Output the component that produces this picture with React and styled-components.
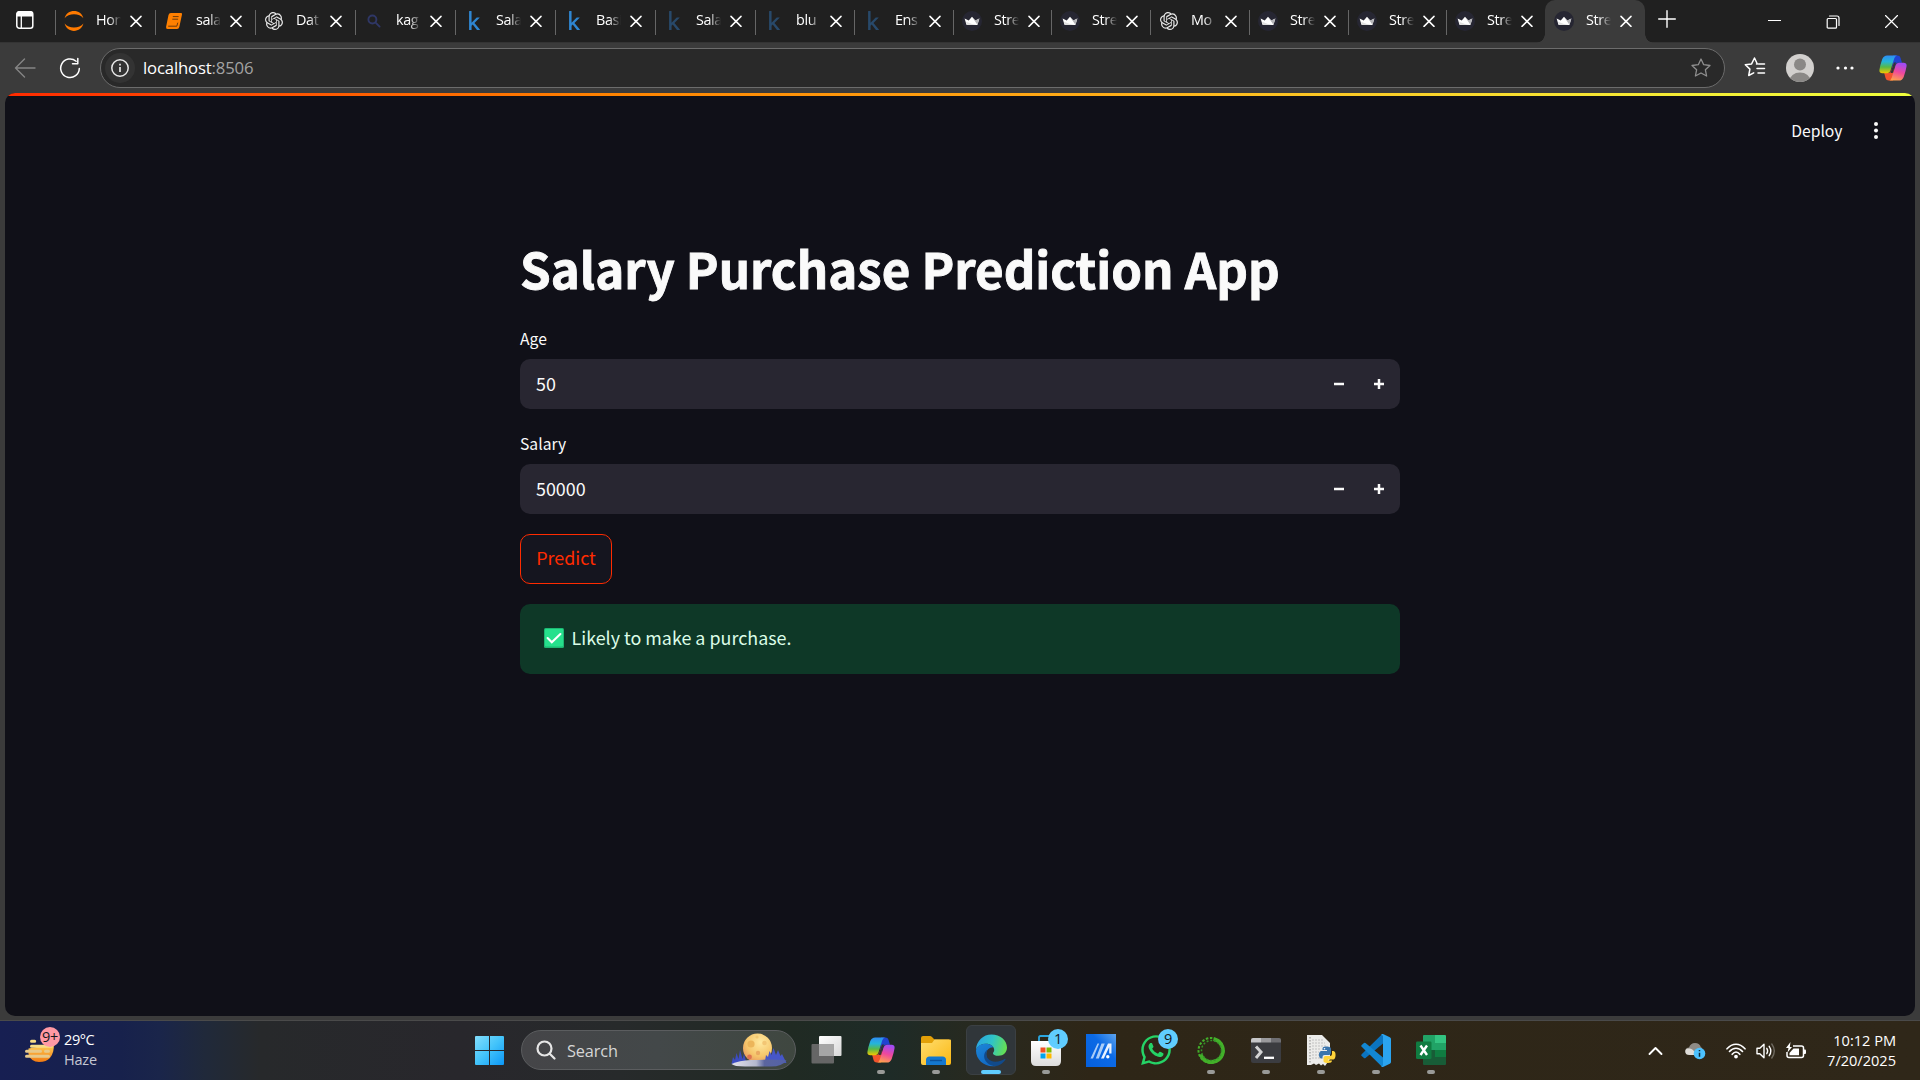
import React from "react";
import styled, { createGlobalStyle, css } from "styled-components";
import { FaKaggle, FaWhatsapp } from "react-icons/fa";
import { SiOpenai } from "react-icons/si";

const Global = createGlobalStyle`
  * { box-sizing: border-box; }
  html, body { margin: 0; padding: 0; height: 100%; overflow: hidden; background: #3b3b3b; }
  svg { display: block; flex: none; }
  button { margin: 0; padding: 0; border: 0; background: none; color: inherit; font: inherit; }
`;

const uiFont = `"Open Sans", "Noto Sans", sans-serif`;
const appFont = `"Noto Sans CJK SC", "Noto Sans", sans-serif`;

const Screen = styled.div`
  width: 1920px;
  height: 1080px;
  display: flex;
  flex-direction: column;
  overflow: hidden;
  font-family: ${uiFont};
  color: #fff;
`;

/* ---------- browser chrome ---------- */

const TabStrip = styled.div`
  height: 43px;
  flex: none;
  display: flex;
  background: #202020;
  border-bottom: 1px solid #343434;
`;

const TabActions = styled.div`
  width: 55px;
  padding: 10px 0 0 15px;
`;

const activeTab = css`
  height: 43px;
  background: #3b3b3b;
  border-radius: 10px 10px 0 0;
  position: relative;
  &::before, &::after {
    content: "";
    position: absolute;
    bottom: 0;
    width: 9px;
    height: 9px;
  }
  &::before { left: -9px; background: radial-gradient(circle at 0 0, transparent 8.5px, #3b3b3b 9px); }
  &::after { right: -9px; background: radial-gradient(circle at 100% 0, transparent 8.5px, #3b3b3b 9px); }
`;

const Tab = styled.div`
  width: ${(p) => p.$width}px;
  height: 42px;
  flex: none;
  display: flex;
  align-items: center;
  ${(p) => p.$active && activeTab}
`;

const TabRule = styled.span`
  width: 1px;
  height: 25px;
  margin-top: 2px;
  background: ${(p) => (p.$hidden ? "transparent" : "#666")};
`;

const TabIcon = styled.span`
  width: 20px;
  height: 20px;
  margin: 0 12px 1px 8px;
  display: flex;
  align-items: center;
  justify-content: center;
  flex: none;
`;

const TabTitle = styled.span`
  width: 34px;
  flex: none;
  white-space: nowrap;
  font-size: 14.4px;
  letter-spacing: -0.4px;
  line-height: 22px;
  padding-bottom: 3px;
  mask-image: linear-gradient(90deg, #000 13px, transparent 25px);
`;

const TabClose = styled.span`
  padding-bottom: 1px;
`;

const NewTab = styled.span`
  margin: 10px 0 0 13px;
`;

const WindowButtons = styled.div`
  display: flex;
  gap: 45px;
  margin: 15px 22px 0 auto;
`;

const Toolbar = styled.div`
  height: 50px;
  flex: none;
  display: flex;
  align-items: center;
  background: #3b3b3b;
  padding-left: 14px;
`;

const NavIcons = styled.div`
  display: flex;
  gap: 23px;
  width: 86px;
  flex: none;
`;

const AddressBar = styled.div`
  width: 1625px;
  height: 40px;
  flex: none;
  border: 1px solid #6c6c6c;
  border-radius: 20px;
  background: #292929;
  display: flex;
  align-items: center;
  padding: 0 13px 0 4px;
`;

const SiteInfo = styled.span`
  width: 30px;
  height: 30px;
  border-radius: 50%;
  background: #333;
  display: flex;
  align-items: center;
  justify-content: center;
`;

const Url = styled.span`
  margin: 0 auto 1px 8px;
  font-size: 16.7px;
  line-height: 24px;
  letter-spacing: -0.15px;
  span { color: #a3a3a3; }
`;

const ToolbarActions = styled.div`
  display: flex;
  align-items: center;
  margin-left: 19px;
`;

const Avatar = styled.span`
  margin: 0 22px 0 20px;
`;

const Assistant = styled.span`
  margin-left: 25px;
`;

/* ---------- page ---------- */

const Viewport = styled.div`
  flex: 1;
  background: #3b3b3b;
  padding: 0 5px 4px;
`;

const Page = styled.div`
  height: 923px;
  border-radius: 10px;
  overflow: hidden;
  background: #101018;
  font-family: ${appFont};
  color: #fafafa;
`;

const Decoration = styled.div`
  height: 3px;
  background: linear-gradient(90deg, #ff2b00 0%, #ff8400 32%, #ffae18 58%, #f8e030 80%, #efff3c 100%);
`;

const PageHeader = styled.header`
  height: 70px;
  display: flex;
  align-items: center;
  justify-content: flex-end;
  gap: 26px;
  padding-right: 32.5px;
`;

const Deploy = styled.button`
  font-size: 15.7px;
  line-height: 28px;
`;

const Main = styled.main`
  width: 880px;
  margin: 0 auto;
  padding-top: 69px;
  display: flex;
  flex-direction: column;
  align-items: stretch;
`;

const Title = styled.h1`
  margin: 0;
  font-size: 49.2px;
  line-height: 66px;
  font-weight: 700;
  white-space: nowrap;
  -webkit-text-stroke: 0.9px #fafafa;
`;

const Field = styled.label`
  display: flex;
  flex-direction: column;
  margin-top: ${(p) => p.$top}px;
`;

const FieldLabel = styled.span`
  font-size: 15.7px;
  line-height: 26px;
  height: 33px;
`;

const NumberBox = styled.span`
  height: 50px;
  border-radius: 10px;
  background: #282631;
  display: flex;
  align-items: center;
  padding: 0 16px;
`;

const NumberValue = styled.span`
  flex: 1;
  font-size: 17.9px;
  line-height: 28px;
  padding-bottom: 3px;
`;

const Steppers = styled.span`
  display: flex;
  gap: 30px;
`;

const PredictButton = styled.button`
  align-self: flex-start;
  width: 92px;
  height: 50px;
  margin: 20px 0;
  border: 1px solid #ff2b00;
  border-radius: 10px;
  background: #15151f;
  color: #ff2b00;
  font-size: 17.9px;
  line-height: 28px;
  padding-bottom: 4px;
`;

const Alert = styled.div`
  height: 70px;
  border-radius: 10px;
  background: #0e3827;
  color: #dcfde8;
  display: flex;
  align-items: center;
  gap: 7.5px;
  padding: 0 24px;
  font-size: 17.9px;
  line-height: 28px;
`;

const EmojiSlot = styled.span`
  padding-bottom: 2px;
`;

const AlertText = styled.span`
  padding-bottom: 4px;
`;

/* ---------- taskbar ---------- */

const Taskbar = styled.div`
  height: 60px;
  flex: none;
  display: flex;
  border-top: 1px solid #4a4a4a;
  background: linear-gradient(90deg, #171f52 0, #17214c 120px, #1a254a 160px, #20293a 205px, #27292b 260px, #28272c 460px,
    #272a2b 620px, #202a23 790px, #1e2b27 890px, #29291e 990px, #2e2617 1090px, #2f2719 100%);
`;

const Weather = styled.div`
  width: 462px;
  display: flex;
  padding: 5px 0 0 24px;
`;

const WeatherText = styled.div`
  margin: 4px 0 0 4px;
  font-size: 14.5px;
  line-height: 20px;
  letter-spacing: -0.4px;
  span { display: block; color: #c4c7d2; letter-spacing: -0.2px; }
`;

const WeatherIcon = styled.div`
  display: grid;
  > * { grid-area: 1 / 1; }
`;

const Badge = styled.span`
  justify-self: end;
  width: 20px;
  height: 20px;
  margin-top: 1px;
  border-radius: 50%;
  background: ${(p) => p.$color};
  color: #14181c;
  font-size: 14.5px;
  line-height: 19px;
  letter-spacing: -0.4px;
  text-align: center;
`;

const AppCell = styled.div`
  width: 50px;
  height: 50px;
  margin: 4px 2.5px 0;
  padding-top: ${(p) => (p.$active ? 8 : 9)}px;
  display: flex;
  flex-direction: column;
  align-items: center;
  gap: 4px;
  border-radius: 6px;
  ${(p) => p.$active && css`background: #30363a; border: 1px solid #3b4043;`}
`;

const IconSlot = styled.span`
  width: 32px;
  height: 32px;
  position: relative;
  display: flex;
  align-items: center;
  justify-content: center;
  ${Badge} { position: absolute; top: -6px; right: -6px; }
`;

const Indicator = styled.span`
  width: ${(p) => (p.$active ? 20 : 8)}px;
  height: 4px;
  border-radius: 2px;
  background: ${(p) => (p.$active ? "#60cdff" : "#999a98")};
`;

const SearchBox = styled.div`
  width: 275px;
  height: 40px;
  flex: none;
  margin: 9px 0 0 4px;
  border-radius: 20px;
  border: 1px solid #5b5d5f;
  background: linear-gradient(90deg, #454548, #434849 50%, #3f4740);
  display: flex;
  align-items: center;
  padding: 0 8px 0 14px;
  font-size: 16.3px;
  color: #d6d6d6;
`;

const SearchText = styled.span`
  flex: 1;
  margin-left: 11px;
  letter-spacing: -0.1px;
  padding-top: 1px;
`;

const Apps = styled.div`
  display: flex;
  margin-left: 2.5px;
`;

const Tray = styled.div`
  display: flex;
  align-items: center;
  margin-left: auto;
  padding-right: 24px;
`;

const TrayIcon = styled.span`
  margin-right: ${(p) => p.$gap}px;
`;

const Clock = styled.div`
  width: 90px;
  text-align: right;
  font-size: 14.6px;
  line-height: 20px;
  letter-spacing: -0.02px;
  white-space: nowrap;
  padding-bottom: 2px;
`;

/* ---------- drawings ---------- */

const Stroke = ({ w = 20, h = w, d, color = "#fff", sw = 1.4, box = `0 0 ${w} ${h}`, fill = "none" }) => (
  <svg width={w} height={h} viewBox={box} fill={fill} stroke={color} strokeWidth={sw} strokeLinecap="round" strokeLinejoin="round">
    <path d={d} />
  </svg>
);

const CloseIcon = () => <Stroke w={12} d="M1 1.4 11 11.4M11 1.4 1 11.4" sw={1.5} />;

const Crown = () => (
  <svg width="20" height="20" viewBox="0 0 20 20">
    <circle cx="10" cy="10" r="10" fill="#262632" />
    <path d="M2.6 7.6 6.7 9.4 10 5.8l3.3 3.6 4.1-1.8-1.8 5.9q-.2.6-.8.6H5.2q-.6 0-.8-.6Z" fill="#fff" />
    <path d="m10 5.8 3.3 3.6 4.1-1.8-2 6.1Z" fill="#b5b5b8" />
    <path d="M4 10.8 10 13l4.6.9H5Z" fill="#e0e0e0" />
  </svg>
);

const Jupyter = () => (
  <svg width="20" height="22" viewBox="0 0 20 22" fill="#ff7a00">
    <path d="M.6 8.2C2 3.400 5.500 1 10 1s8 2.400 9.400 7.200C17.400 5.500 14 4.300 10 4.300S2.600 5.500.6 8.200Z" />
    <path d="M.6 13.600C2 18.500 5.500 20.900 10 20.900s8-2.400 9.400-7.300c-2 2.800-5.400 4-9.400 4s-7.400-1.200-9.400-4Z" />
  </svg>
);

const Book = () => (
  <svg width="18" height="18" viewBox="0 0 18 18">
    <path d="M5.800 1h10.200q1.300 0 1 1.400l-2.700 12.500q-.4 2-2.300 2H2.600Q.600 16.900 1.100 14.700L3.500 2.900Q4 1 5.800 1Z" fill="#ff8000" />
    <path d="M7.800 4.600h5.800M7.300 7.200h5.800" stroke="#6b3a0c" strokeWidth="1" fill="none" />
    <path d="M3.200 14.200h8.600l1-3.500" stroke="#5a310d" strokeWidth=".9" fill="none" />
  </svg>
);

const Lens = () => <Stroke w={14} d="M9.400 5.500a4 4 0 1 1-8 0 4 4 0 0 1 8 0ZM8.600 8.600l4 4" color="#2f3766" sw={1.900} />;

const tabIcons = {
  jupyter: <Jupyter />,
  book: <Book />,
  openai: <SiOpenai size={18} color="#e8e8e8" />,
  lens: <Lens />,
  kaggle: <FaKaggle size={19} color="#2f86d1" />,
  kaggleDim: <FaKaggle size={19} color="#28496a" />,
  crown: <Crown />,
};

const tabs = [
  ["jupyter", "Hon", 100],
  ["book", "sala", 100],
  ["openai", "Dat", 100],
  ["lens", "kag", 100],
  ["kaggle", "Sala", 100],
  ["kaggle", "Basi", 100],
  ["kaggleDim", "Sala", 100],
  ["kaggleDim", "blu", 99],
  ["kaggleDim", "Ens", 99],
  ["crown", "Stre", 98],
  ["crown", "Stre", 99],
  ["openai", "Mo", 99],
  ["crown", "Stre", 99],
  ["crown", "Stre", 98],
  ["crown", "Stre", 99],
  ["crown", "Stre", 100, true],
];

const Copilot = ({ id, w = 28 }) => (
  <svg width={w} height={w} viewBox="0 0 28 28">
    <defs>
      <linearGradient id={`${id}a`} x1="0" y1="0" x2="0" y2="1">
        <stop offset="0" stopColor="#2e8df5" />
        <stop offset=".35" stopColor="#25b5d8" />
        <stop offset=".65" stopColor="#57b948" />
        <stop offset="1" stopColor="#f2c800" />
      </linearGradient>
      <linearGradient id={`${id}b`} x1=".6" y1="0" x2=".3" y2="1">
        <stop offset="0" stopColor="#a04bf5" />
        <stop offset=".5" stopColor="#f0489c" />
        <stop offset="1" stopColor="#ffa34c" />
      </linearGradient>
    </defs>
    <path d="M14 1.500h4.500q2.300 0 3 2.300l1.500 5h-4q-2.500 0-3.300 2.700L13 19Z" fill="#2143d0" />
    <path d="M14 26.500H9.600q-2.300 0-3-2.300L5.200 19h4q2.300 0 3.100-2.600L15 9Z" fill="#f2542d" />
    <path d="M8.200 1.500H18q-2 .4-2.800 3.100l-3.700 12q-.8 2.600-3.300 2.600H3.300q-3.400 0-2.800-3.600.7-4.600 2.800-10.500Q4.700 1.500 8.200 1.500Z" fill={`url(#${id}a)`} />
    <path d="M19.800 26.500H10q2-.4 2.800-3.100l3.700-12q.8-2.600 3.300-2.600h4.900q3.400 0 2.800 3.600-.7 4.600-2.800 10.500-1.400 3.600-4.900 3.600Z" fill={`url(#${id}b)`} />
    <path d="M16.300 10.500 13.700 19h-2.200q.3-.7.600-1.700l2.300-7.400q.4-1 .8-1.400h2q-.6.700-.9 2Z" fill="#33343a" />
  </svg>
);

const AvatarIcon = () => (
  <svg width="28" height="28" viewBox="0 0 28 28">
    <clipPath id="avatarClip"><circle cx="14" cy="14" r="14" /></clipPath>
    <g clipPath="url(#avatarClip)">
      <rect width="28" height="28" fill="#d2d0ce" />
      <circle cx="14" cy="10.500" r="6" fill="#8a8886" />
      <ellipse cx="14" cy="27" rx="10.500" ry="8.500" fill="#8a8886" />
    </g>
  </svg>
);

const CheckEmoji = () => (
  <svg width="20" height="20" viewBox="0 0 20 20">
    <rect width="20" height="20" rx="1.500" fill="#1db873" />
    <rect x="1" y="1" width="18" height="17.500" rx="1" fill="#26e08c" />
    <path d="m3.600 10 4.200 4.300 8.600-8.300" stroke="#fff" strokeWidth="2.100" fill="none" strokeLinecap="round" />
  </svg>
);

const HazeIcon = () => (
  <svg width="36" height="38" viewBox="0 0 36 38">
    <defs>
      <linearGradient id="sun" x1="0" y1="0" x2="0" y2="1">
        <stop offset="0" stopColor="#ffd35a" />
        <stop offset="1" stopColor="#f27a12" />
      </linearGradient>
    </defs>
    <path d="M4.500 22.500 30 18q0 18-15 18-8 0-10.500-8Z" fill="url(#sun)" />
    <g stroke="#f6dc85" strokeWidth="3" strokeLinecap="round">
      <path d="M7.500 15.200h3.200M7.500 20.300h20" />
      <path d="M2.500 25.300h14M21.500 25.300h3M2.500 30.300h22" stroke="#e8c98a" />
    </g>
  </svg>
);

const StartIcon = () => (
  <svg width="29" height="29" viewBox="0 0 29 29">
    <linearGradient id="win" x1="0" y1="0" x2="1" y2="1">
      <stop offset="0" stopColor="#83defc" />
      <stop offset=".5" stopColor="#42c3fa" />
      <stop offset="1" stopColor="#0c97f7" />
    </linearGradient>
    <path d="M1 0h13v14H0V1q0-1 1-1ZM15 0h13q1 0 1 1v13H15ZM0 15h14v14H1q-1 0-1-1ZM15 15h14v13q0 1-1 1H15Z" fill="url(#win)" />
  </svg>
);

const MoonArt = () => (
  <svg width="56" height="34" viewBox="0 0 56 34">
    <defs>
      <radialGradient id="moon" cx=".6" cy=".3" r=".8">
        <stop offset="0" stopColor="#ffe9a0" />
        <stop offset=".6" stopColor="#f6c66b" />
        <stop offset="1" stopColor="#e58f5e" />
      </radialGradient>
      <linearGradient id="snow"><stop offset="0" stopColor="#e4e2ea" /><stop offset=".45" stopColor="#b4b8ce" /><stop offset=".6" stopColor="#5b659f" /><stop offset="1" stopColor="#5361a8" /></linearGradient>
    </defs>
    <circle cx="26.500" cy="15" r="14.500" fill="url(#moon)" />
    <circle cx="20" cy="11" r="3.600" fill="#ecb55a" /><circle cx="33.500" cy="10" r="2.300" fill="#f3c675" />
    <circle cx="27" cy="20" r="2.200" fill="#eaa961" /><circle cx="18.500" cy="24" r="2.400" fill="#dd7350" /><circle cx="26" cy="4" r="1.600" fill="#f3ca72" />
    <path d="M.5 31 2 24l2 3 1.500-7 2 6L9 17l2.500 9 1.500-5 2.500 9Z" fill="#3c4cc0" />
    <path d="M34 28l1-6 2 2 1.500-6 2 4L42.500 15l2.500 7 2-5 2.500 6 1.500-2 4.500 9Z" fill="#4656c8" />
    <path d="M.500 31Q8 27.500 20 27q24-1 35.500.500Q51 33.500 40 33.500H14Q3 33.500.500 31Z" fill="url(#snow)" />
  </svg>
);

const TaskView = () => (
  <svg width="31" height="30" viewBox="0 0 31 30">
    <linearGradient id="tv" x1="0" y1="0" x2="1" y2="1"><stop offset="0" stopColor="#fff" /><stop offset="1" stopColor="#d8d8d8" /></linearGradient>
    <rect x="8" y="1" width="22.500" height="20" rx="1" fill="url(#tv)" />
    <rect x=".5" y="9" width="22.500" height="19.500" rx="1" fill="#666" />
    <path d="M8 9h15v12H8Z" fill="#a6a6a6" />
  </svg>
);

const Folder = () => (
  <svg width="30" height="30" viewBox="0 0 30 30">
    <linearGradient id="fold" x1="0" y1="0" x2="1" y2="1"><stop offset="0" stopColor="#ffdd6e" /><stop offset="1" stopColor="#fbb813" /></linearGradient>
    <path d="M0 3q0-2 2-2h7q1 0 2 1l2.500 2.500H28V12H0Z" fill="#e3a008" />
    <path d="M0 8h11l2.500-3.500H29q1 0 1 1V28q0 2-2 2H2q-2 0-2-2Z" fill="url(#fold)" />
    <path d="M5 30v-5q0-3.500 3.500-3.500h13q3.500 0 3.500 3.500v5Z" fill="#1478cf" />
    <path d="M9 25.500h12" stroke="#0b529c" strokeWidth="1.400" />
  </svg>
);

const EdgeIcon = () => (
  <svg width="31" height="33" viewBox="0 0 32 33">
    <defs>
      <linearGradient id="e1" x1="0" y1=".3" x2="1" y2=".5"><stop offset="0" stopColor="#2aa4e3" /><stop offset=".5" stopColor="#2fc3c8" /><stop offset="1" stopColor="#66e052" /></linearGradient>
      <linearGradient id="e2" x1="0" y1="0" x2=".5" y2="1"><stop offset="0" stopColor="#1c86d8" /><stop offset="1" stopColor="#1269c4" /></linearGradient>
    </defs>
    <path d="M0 15.500C.5 6.500 7.500 0 16 0c9 0 16 6 16 13.500 0 5-3.700 8.500-8.800 8.500-3.700 0-5.700-1.400-5.700-2.700 0-.8 1.300-1.400 1.300-3.300 0-3.700-3.800-6.500-8.600-6.500C5.600 9.500 2 11.500 0 15.500Z" fill="url(#e1)" />
    <path d="M0 16.500C.5 12 5 9.500 10.200 9.500c3.500 0 6.500 1.500 7.900 3.700-4.300-.3-7.600 3-7.600 7.300 0 6.500 5.500 11.500 10.500 12C9.500 34.500 0 26.500 0 16.500Z" fill="url(#e2)" />
    <path d="M11.500 16c-3 7 2 12 8.500 12 4 0 7.500-1.500 9.500-2.800.7-.4 1.200.2.800.8C27 31 22 33 18 32.500c-6-1-10.500-6.500-9.500-11.500.4-2.300 1.500-4 3-5Z" fill="#114a8b" />
  </svg>
);

const StoreIcon = () => (
  <svg width="30" height="33" viewBox="0 0 30 33">
    <linearGradient id="bag" x1="0" y1="0" x2="0" y2="1"><stop offset="0" stopColor="#fff" /><stop offset="1" stopColor="#dcdcdc" /></linearGradient>
    <path d="M8 8V3.500Q8 2 9.500 2h11Q22 2 22 3.500V8" fill="none" stroke="#2ba7e0" strokeWidth="1.800" />
    <path d="M0 7h30v20q0 5-5 5H5q-5 0-5-5Z" fill="url(#bag)" />
    <path d="M9.500 13.500h5v5h-5Z" fill="#f25022" /><path d="M15.500 13.500h5v5h-5Z" fill="#7fba00" />
    <path d="M9.500 19.500h5v5h-5Z" fill="#00a4ef" /><path d="M15.500 19.500h5v5h-5Z" fill="#ffb900" />
  </svg>
);

const ArmouryIcon = () => (
  <svg width="30" height="33" viewBox="0 0 30 33">
    <linearGradient id="my" x1="0" y1="1" x2="1" y2="0"><stop offset="0" stopColor="#055fdd" /><stop offset=".6" stopColor="#0b6ae6" /><stop offset="1" stopColor="#5da4ee" /></linearGradient>
    <rect width="30" height="33" fill="url(#my)" />
    <path d="M4.500 24.500 11.500 9.500h1.700L7 24.500ZM9.800 24.500l5.700-15h3.300l-6 15Z" fill="#a9cdf8" />
    <path d="M15 24.500 22 9.500H25.500V19.500h-2.300V13l-5.400 11.500Z" fill="#e8f2ff" />
    <circle cx="21.800" cy="22.800" r="1.700" fill="#fff" />
  </svg>
);

const AnacondaIcon = () => (
  <svg width="28" height="31" viewBox="0 0 28 31" fill="none">
    <circle cx="14.500" cy="15.500" r="11.500" stroke="#43b02a" strokeWidth="3.800" strokeDasharray="48 100" transform="rotate(-80 14.500 15.500)" />
    <circle cx="14" cy="15.500" r="12.500" stroke="#43b02a" strokeWidth="2" strokeDasharray="2.500 1.600" />
    <circle cx="14.500" cy="15.500" r="10" stroke="#35912a" strokeWidth="1.500" strokeDasharray="2 1.800" />
  </svg>
);

const TerminalIcon = () => (
  <svg width="30" height="25" viewBox="0 0 30 25">
    <rect width="30" height="25" rx="2" fill="#3b3c40" />
    <path d="M2 0h8v4.500H0V2Q0 0 2 0Z" fill="#c6c6c8" /><path d="M10 0h10v4.500H10Z" fill="#9a9a9d" /><path d="M20 0h8q2 0 2 2v2.500H20Z" fill="#6e6e72" />
    <path d="m5 8.500 5 5.500-5 6" stroke="#d3d3d3" strokeWidth="3" fill="none" />
    <path d="M13 19.800h10" stroke="#fff" strokeWidth="2.300" />
  </svg>
);

const PyFileIcon = () => (
  <svg width="30" height="31" viewBox="0 0 30 31">
    <path d="M1 0h15l8 8v16l-5 7-2-2-2 1.500-2-2-3 1.500-2-1.500-3 1.500H1Z" fill="#ececea" />
    <path d="M4 2v27" stroke="#888" strokeWidth="1" strokeDasharray="1.500 1.500" />
    <path d="M6 5h11M6 8h13M6 11h15M6 14h9M6 17h7M6 20h8M6 23h8" stroke="#bcbcbc" strokeWidth=".9" strokeDasharray="2 1" />
    <path d="M20 11.500c4 0 5 1 5 2.500v4q0 2-2 2h-4.500q-2 0-2 2v1.500H15c-3-1-2.500-7 0-7.500h6v-1h-4.500V13.500q0-2 3.500-2Z" fill="#3a75ad" />
    <path d="M22 28c-4 0-4.500-1-4.500-2.500V23q0-2 2-2h4.500q2 0 2-2v-3h1.500c3 .5 2.500 8 0 8.500H22v1h4q0 2.500-4 2.500Z" fill="#ffd43b" />
    <circle cx="18.500" cy="13.800" r=".8" fill="#fff" />
  </svg>
);

const VsCodeIcon = () => (
  <svg width="30" height="33" viewBox="0 0 30 33">
    <path d="M22 0 22 9.500 4.500 24q-.8.6-1.500 0L.7 22q-.9-.9 0-1.700L20 1.200Q21 0 22 0Z" fill="#0b74c0" />
    <path d="M22 33V23.500L4.500 9q-.8-.6-1.500 0L.7 11q-.9.9 0 1.700L20 31.800Q21 33 22 33Z" fill="#1287d3" />
    <path d="M22 0 28.800 3.200Q30 3.800 30 5v23q0 1.200-1.200 1.800L22 33q-1.300.3-2-1.200 2 .8 2-1.300v-28Q22 .3 20 1.200 20.700-.3 22 0Z" fill="#2ba4f0" />
  </svg>
);

const ExcelIcon = () => (
  <svg width="30" height="30" viewBox="0 0 30 30">
    <path d="M8 0h11v15H7V1q0-1 1-1Z" fill="#21a366" /><path d="M19 0h10q1 0 1 1v7H19Z" fill="#33c481" />
    <path d="M19 8h11v7H19Z" fill="#21a366" /><path d="M7 15h12v7H7Z" fill="#185c37" /><path d="M19 15h11v7H19Z" fill="#107c41" />
    <path d="M7 22h23v7q0 1-1 1H8q-1 0-1-1Z" fill="#185c37" />
    <rect x="0" y="6.500" width="15.500" height="17.500" rx="1.200" fill="#107c41" />
    <path d="m4.500 10.500 6.500 9.500M11 10.500 4.500 20" stroke="#fff" strokeWidth="2.400" />
  </svg>
);

const apps = [
  { icon: <TaskView /> },
  { icon: <Copilot id="tb" />, open: true },
  { icon: <Folder />, open: true },
  { icon: <EdgeIcon />, open: true, active: true },
  { icon: <StoreIcon />, open: true, badge: "1" },
  { icon: <ArmouryIcon /> },
  { icon: <FaWhatsapp size={34} color="#25d366" />, badge: "9" },
  { icon: <AnacondaIcon />, open: true },
  { icon: <TerminalIcon />, open: true },
  { icon: <PyFileIcon />, open: true },
  { icon: <VsCodeIcon />, open: true },
  { icon: <ExcelIcon />, open: true },
];

const CloudIcon = () => (
  <svg width="21" height="18" viewBox="0 0 21 18">
    <path d="M5 12.500q-5 0-4.700-4Q1 5.500 4 5.500 5.500 1 10 1q4.500 0 5.800 4 1.500.5 1.800 2.500L13 12.500Z" fill="#8e8b86" />
    <path d="M4.500 13Q.3 13 .3 9.500T4 6.500q2-.5 4 1.500l4 5Z" fill="#dedcd8" />
    <circle cx="14.500" cy="11.500" r="5.800" fill="#4cc2ff" />
    <path d="M14.500 10.700v4M14.500 8v1.200" stroke="#0c2a3a" strokeWidth="1.500" />
  </svg>
);

const WifiIcon = () => (
  <svg width="20" height="16" viewBox="0 0 20 16" fill="none" stroke="#fff" strokeWidth="1.600" strokeLinecap="round">
    <path d="M1 5.800Q5 1.300 10 1.300t9 4.500M3.500 8.500Q6.300 5.200 10 5.200t6.500 3.300M6.200 11.300Q8 9 10 9t3.800 2.300" />
    <circle cx="10" cy="13.600" r="1.100" fill="#fff" />
  </svg>
);

const SpeakerIcon = () => (
  <svg width="20" height="18" viewBox="0 0 20 18" fill="none" stroke="#fff" strokeWidth="1.400" strokeLinecap="round" strokeLinejoin="round">
    <path d="M1 6.300h2.800L8 2.200v13.600l-4.200-4.100H1ZM10.800 6.300q1.700 2.700 0 5.400M13.200 4.300q3.200 4.700 0 9.400" />
    <path d="M15.800 2q5 7 0 14" stroke="#6f6a60" />
  </svg>
);

const BatteryIcon = () => (
  <svg width="20" height="18" viewBox="0 0 20 18">
    <path d="M7 4h8.500Q17.500 4 17.500 6v7.500q0 2-2 2H3q-2 0-2-2V10" fill="none" stroke="#fff" strokeWidth="1.500" />
    <path d="M18 7.500h1q1 0 1 1v2.500q0 1-1 1h-1Z" fill="#fff" />
    <path d="M7.500 6.500h5.500v6.800H3.500V11Z" fill="#fff" />
    <path d="M4.500 0 0 6h2.500L1.500 10.500 6 5H3.800Z" fill="#fff" />
  </svg>
);

const NumberField = ({ label, value, top }) => (
  <Field $top={top}>
    <FieldLabel>{label}</FieldLabel>
    <NumberBox>
      <NumberValue>{value}</NumberValue>
      <Steppers>
        <svg width="10" height="10" viewBox="0 0 10 10"><path d="M0 5h10" stroke="#fafafa" strokeWidth="2.500" /></svg>
        <svg width="10" height="10" viewBox="0 0 10 10"><path d="M0 5h10M5 0v10" stroke="#fafafa" strokeWidth="2.500" /></svg>
      </Steppers>
    </NumberBox>
  </Field>
);

export default function App() {
  return (
    <Screen>
      <Global />
      <TabStrip>
        <TabActions>
          <svg width="20" height="20" viewBox="0 0 20 20" fill="none">
            <rect x="1.800" y="1.800" width="16" height="16.400" rx="2.500" stroke="#fff" strokeWidth="1.500" />
            <path d="M1.500 6.500V4q0-3 3-3h10.500q3 0 3 3v2.500Z" fill="#fff" />
            <path d="M6.300 6v12" stroke="#fff" strokeWidth="1.300" />
          </svg>
        </TabActions>
        {tabs.map(([icon, title, width, active], i) => (
          <Tab key={i} $width={width} $active={active}>
            <TabRule $hidden={active} />
            <TabIcon>{tabIcons[icon]}</TabIcon>
            <TabTitle>{title}</TabTitle>
            <TabClose><CloseIcon /></TabClose>
          </Tab>
        ))}
        <NewTab><Stroke w={18} d="M9 .7v16.600M.7 9h16.600" /></NewTab>
        <WindowButtons>
          <Stroke w={13} d="M.5 5.500h12" sw={1.200} />
          <Stroke w={14} sw={1.200} d="M2.200 3.500h7.300q1 0 1 1v7.700q0 1-1 1H2.200q-1 0-1-1V4.500q0-1 1-1ZM3.500 1h7.500q2 0 2 2v7.500" />
          <Stroke w={13} d="M.5.5 12.500 12.500M12.500.5.5 12.500" sw={1.200} />
        </WindowButtons>
      </TabStrip>
      <Toolbar>
        <NavIcons>
          <Stroke w={22} color="#858585" d="M21 11H1.500M10.500 2 1.500 11l9 9" />
          <Stroke w={22} d="M20.300 11.500a9.300 9.300 0 1 1-3.200-7.300M18.800 1.500v5.300h-5.300" sw={1.500} />
        </NavIcons>
        <AddressBar>
          <SiteInfo>
            <svg width="18" height="18" viewBox="0 0 18 18" fill="none" stroke="#e8e8e8" strokeWidth="1.500">
              <circle cx="9" cy="9" r="8.200" />
              <path d="M9 8v5M9 4.800v1.600" strokeWidth="1.700" />
            </svg>
          </SiteInfo>
          <Url>localhost<span>:8506</span></Url>
          <Stroke w={20} color="#8f8f8f" sw={1.300} d="m10 1 2.700 5.700 6.300.8-4.600 4.300 1.200 6.200L10 15l-5.600 3 1.200-6.200L1 7.500l6.300-.8Z" />
        </AddressBar>
        <ToolbarActions>
          <Stroke w={22} d="M12.500 7H13.300L10.500 1 7.600 6.900 1.300 7.700l4.600 4.400-1.200 6.400 5-2.700M14.500 7h6M13 11.500h7.500M14 16h6.500" sw={1.500} />
          <Avatar><AvatarIcon /></Avatar>
          <svg width="18" height="4" viewBox="0 0 18 4" fill="#fff">
            <circle cx="2" cy="2" r="1.600" /><circle cx="9.500" cy="2" r="1.600" /><circle cx="16" cy="2" r="1.600" />
          </svg>
          <Assistant><Copilot id="br" /></Assistant>
        </ToolbarActions>
      </Toolbar>
      <Viewport>
        <Page>
          <Decoration />
          <PageHeader>
            <Deploy>Deploy</Deploy>
            <svg width="14" height="20" viewBox="0 0 14 20" fill="#fafafa">
              <circle cx="7" cy="3" r="2" /><circle cx="7" cy="9.500" r="2" /><circle cx="7" cy="16" r="2" />
            </svg>
          </PageHeader>
          <Main>
            <Title>Salary Purchase Prediction App</Title>
            <NumberField label="Age" value="50" top={25} />
            <NumberField label="Salary" value="50000" top={22} />
            <PredictButton>Predict</PredictButton>
            <Alert><EmojiSlot><CheckEmoji /></EmojiSlot><AlertText>Likely to make a purchase.</AlertText></Alert>
          </Main>
        </Page>
      </Viewport>
      <Taskbar>
        <Weather>
          <WeatherIcon>
            <HazeIcon />
            <Badge $color="#ff99a4">9+</Badge>
          </WeatherIcon>
          <WeatherText>29°C<span>Haze</span></WeatherText>
        </Weather>
        <AppCell><IconSlot><StartIcon /></IconSlot></AppCell>
        <SearchBox>
          <Stroke w={20} d="M15.500 8.500a7 7 0 1 1-14 0 7 7 0 0 1 14 0ZM13.500 13.500l5 5" color="#e6e6e6" sw={2.200} />
          <SearchText>Search</SearchText>
          <MoonArt />
        </SearchBox>
        <Apps>
          {apps.map(({ icon, open, active, badge }, i) => (
            <AppCell key={i} $active={active}>
              <IconSlot>
                {icon}
                {badge && <Badge $color="#60cdff">{badge}</Badge>}
              </IconSlot>
              {open && <Indicator $active={active} />}
            </AppCell>
          ))}
        </Apps>
        <Tray>
          <TrayIcon $gap={22}><Stroke w={15} h={10} d="M1.500 8 7.500 2l6 6" sw={1.900} /></TrayIcon>
          <TrayIcon $gap={20}><CloudIcon /></TrayIcon>
          <TrayIcon $gap={10}><WifiIcon /></TrayIcon>
          <TrayIcon $gap={10}><SpeakerIcon /></TrayIcon>
          <BatteryIcon />
          <Clock>10:12 PM<br />7/20/2025</Clock>
        </Tray>
      </Taskbar>
    </Screen>
  );
}
